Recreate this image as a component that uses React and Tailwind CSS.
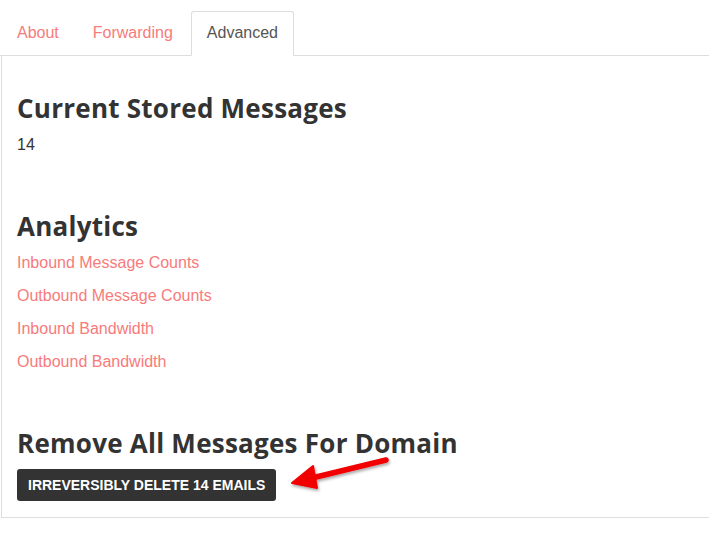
const tabs = ["About", "Forwarding", "Advanced"];

const links = [
  "Inbound Message Counts",
  "Outbound Message Counts",
  "Inbound Bandwidth",
  "Outbound Bandwidth",
];

const headingFont = "font-['Open_Sans',sans-serif] font-bold text-[26px] tracking-[0.25px] leading-[32px] text-[#333]";

export default function App() {
  return (
    <div className="w-[709px] h-[554px] bg-white font-['Liberation_Sans',Arial,sans-serif] text-[16px] text-[#333] pt-[11px]">
      <ul className="flex gap-[2px] pl-[1px] border-b border-[#ddd]">
        {tabs.map((t) => (
          <li
            key={t}
            className={
              t === "Advanced"
                ? "px-[15px] py-[11px] leading-[20px] border border-[#ddd] border-b-white -mb-px rounded-t-[3px] bg-white text-[#555]"
                : "px-[15px] py-[11px] leading-[20px] border border-transparent text-[#f77b7b]"
            }
          >
            {t}
          </li>
        ))}
      </ul>
      <div className="ml-px w-[720px] border-l border-b border-[#ddd] px-[15px] pt-[36px] pb-[16px]">
        <h2 className={headingFont}>Current Stored Messages</h2>
        <p className="mt-[11px] leading-[20px]">14</p>

        <h2 className={`${headingFont} mt-[55px]`}>Analytics</h2>
        <div className="mt-[11px] flex flex-col gap-[13px] text-[#f77b7b]">
          {links.map((l) => (
            <a key={l} href="#" className="leading-[20px]">{l}</a>
          ))}
        </div>

        <h2 className={`${headingFont} mt-[55px]`}>Remove All Messages For Domain</h2>
        <div className="relative mt-[10px]">
          <button className="bg-[#333] text-white font-bold text-[14px] uppercase px-[11px] h-[32px] rounded-[3px]">
            Irreversibly delete 14 emails
          </button>
          <svg className="absolute left-[269px] top-[-13px]" width="110" height="40" viewBox="0 0 110 40">
            <defs>
              <filter id="sh" x="-20%" y="-50%" width="140%" height="200%">
                <feDropShadow dx="1" dy="2" stdDeviation="1.5" floodColor="#000" floodOpacity="0.35" />
              </filter>
            </defs>
            <g filter="url(#sh)">
              <line x1="100" y1="4" x2="26" y2="22" stroke="#f20000" strokeWidth="5.5" strokeLinecap="round" />
              <path d="M6 27 L27 10 L31 32 Z" fill="#f20000" stroke="#f20000" strokeLinejoin="round" strokeWidth="2" />
            </g>
          </svg>
        </div>
      </div>
    </div>
  );
}
